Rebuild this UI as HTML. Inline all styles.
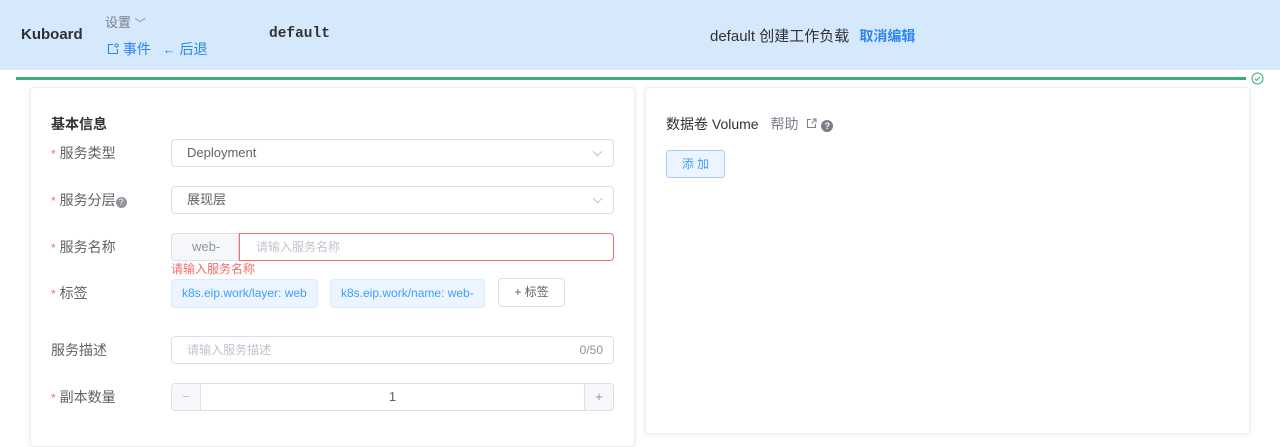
<!DOCTYPE html>
<html><head><meta charset="utf-8"><style>
*{box-sizing:border-box;margin:0;padding:0}
body{width:1280px;height:435px;overflow:hidden;background:#fff;font-family:"Liberation Sans","Noto Sans CJK SC",sans-serif;font-size:13px;color:#303133;position:relative}
.hd{position:absolute;left:0;top:0;width:1280px;height:70px;background:#d6e8fc}
.a{position:absolute;white-space:nowrap}
.card{position:absolute;top:87px;background:#fff;border:1px solid #ebeef5;border-radius:4px;box-shadow:0 1px 6px rgba(0,0,0,.08);height:360px}
.lbl{position:absolute;left:20px;font-size:14px;color:#606266}
.lbl i{color:#f56c6c;font-style:normal;margin-right:4px;font-size:12px}
.inp{position:absolute;left:140px;width:443px;height:28px;border:1px solid #dcdfe6;border-radius:4px;font-size:13px;line-height:26px;padding-left:15px;color:#606266}
.arr{position:absolute;right:12px;top:8px;width:7px;height:7px;border-right:1px solid #c0c4cc;border-bottom:1px solid #c0c4cc;transform:rotate(45deg)}
.tag{position:absolute;top:191px;height:29px;background:#ecf5ff;border:1px solid #d9ecff;border-radius:4px;color:#409eff;font-size:12px;line-height:27px;padding:0 10px}
</style></head><body>
<div class="hd"></div>
<div class="a" style="left:21px;top:26px;font-size:15px;font-weight:bold;color:#303133">Kuboard</div>
<div class="a" style="left:105px;top:12px;font-size:13px;color:#7a7f87">设置 <span style="font-size:11px">﹀</span></div>
<div class="a" style="left:107px;top:39px;font-size:14px;color:#2b86f0">
<svg width="12" height="12" viewBox="0 0 12 12" style="vertical-align:-1px"><path d="M6 1.5H1.5v9h9V6" fill="none" stroke="#2b86f0" stroke-width="1.1"/><circle cx="9.5" cy="2.5" r="1.6" fill="none" stroke="#2b86f0" stroke-width="1"/></svg> 事件 &nbsp;&nbsp;<span style="font-size:13px">←</span> 后退</div>
<div class="a" style="left:269px;top:26px;font-family:'Liberation Mono',monospace;font-weight:bold;font-size:14.5px;color:#303133">default</div>
<div class="a" style="left:710px;top:25px;font-size:15px;color:#303133">default 创建工作负载 <span style="color:#2b86f0;font-size:14px;font-weight:bold;margin-left:6px">取消编辑</span></div>
<div class="a" style="left:16px;top:77px;width:1230px;height:3px;background:#3dab7c"></div>
<svg class="a" style="left:1251px;top:72px" width="13" height="13" viewBox="0 0 13 13"><circle cx="6.5" cy="6.5" r="5.5" fill="none" stroke="#3dab7c"/><path d="M4 6.6l1.8 1.8L9 5" fill="none" stroke="#3dab7c"/></svg>

<div class="card" style="left:30px;width:605px">
<div class="a" style="left:20px;top:26px;font-size:14px;font-weight:bold;color:#303133">基本信息</div>
<div class="lbl" style="top:55px"><i>*</i>服务类型</div>
<div class="inp" style="top:51px">Deployment<span class="arr"></span></div>
<div class="lbl" style="top:102px"><i>*</i>服务分层<span style="display:inline-block;width:11px;height:11px;border-radius:50%;background:#909399;color:#fff;font-size:9px;line-height:11px;text-align:center;vertical-align:0">?</span></div>
<div class="inp" style="top:98px">展现层<span class="arr"></span></div>
<div class="lbl" style="top:149px"><i>*</i>服务名称</div>
<div class="inp" style="top:145px;width:68px;background:#f5f7fa;border-radius:4px 0 0 4px;color:#909399;padding-left:20px">web-</div>
<div class="inp" style="top:145px;left:208px;width:375px;border-color:#f56c6c;border-radius:0 4px 4px 0;color:#c0c4cc;padding-left:16px;font-size:12px">请输入服务名称</div>
<div class="a" style="left:140px;top:172px;font-size:12px;color:#f56c6c">请输入服务名称</div>
<div class="lbl" style="top:195px"><i>*</i>标签</div>
<div class="tag" style="left:140px">k8s.eip.work/layer: web</div>
<div class="tag" style="left:299px">k8s.eip.work/name: web-</div>
<div class="a" style="left:467px;top:190px;width:67px;height:29px;border:1px solid #dcdfe6;border-radius:4px;text-align:center;line-height:27px;font-size:12px;color:#606266">+ 标签</div>
<div class="lbl" style="top:252px">服务描述</div>
<div class="inp" style="top:248px;color:#c0c4cc;font-size:12px">请输入服务描述<span style="position:absolute;right:10px;color:#909399">0/50</span></div>
<div class="lbl" style="top:299px"><i>*</i>副本数量</div>
<div class="inp" style="top:295px;padding:0;text-align:center;color:#606266">1
<span style="position:absolute;left:0;top:0;width:29px;height:26px;background:#f5f7fa;border-right:1px solid #dcdfe6;color:#c0c4cc;border-radius:4px 0 0 4px">−</span>
<span style="position:absolute;right:0;top:0;width:29px;height:26px;background:#f5f7fa;border-left:1px solid #dcdfe6;color:#909399;border-radius:0 4px 4px 0">+</span></div>
</div>

<div class="card" style="left:645px;width:605px;height:347px">
<div class="a" style="left:20px;top:26px;font-size:14px;color:#303133">数据卷 Volume <span style="color:#7a7f87;margin-left:8px">帮助</span>
<svg width="11" height="11" viewBox="0 0 11 11" style="margin-left:4px"><path d="M5 1.5H1.5v8h8V6M6.5 1h3.5v3.5M10 1L5.5 5.5" fill="none" stroke="#7a7f87"/></svg>
<span style="display:inline-block;width:12px;height:12px;border-radius:50%;background:#7a7f87;color:#fff;font-size:9px;line-height:12px;text-align:center;font-weight:bold">?</span></div>
<div class="a" style="left:20px;top:62px;width:59px;height:28px;background:#ecf5ff;border:1px solid #a0cfff;border-radius:3px;color:#409eff;font-size:12px;line-height:26px;text-align:center">添 加</div>
</div>
</body></html>
